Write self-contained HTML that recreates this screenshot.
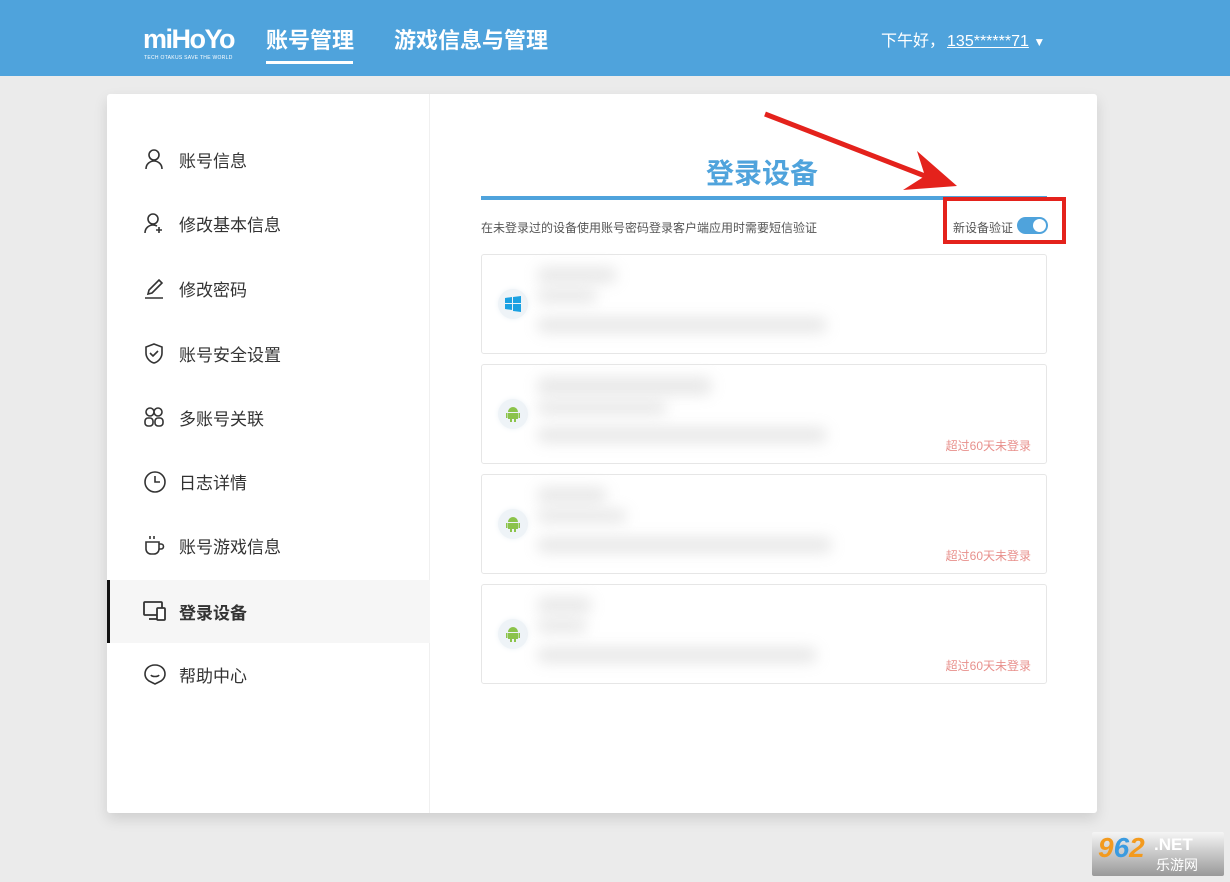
<!DOCTYPE html>
<html><head><meta charset="utf-8"><style>
*{margin:0;padding:0;box-sizing:border-box}
body{width:1230px;height:882px;background:#ebebeb;font-family:"Liberation Sans","Noto Sans CJK SC",sans-serif;position:relative;overflow:hidden}
.hd{position:absolute;left:0;top:0;width:1230px;height:76px;background:#4fa3dc;color:#fff}
.logo{position:absolute;left:143px;top:24px;font-size:27px;font-weight:bold;letter-spacing:-1.5px;font-family:"Liberation Sans",sans-serif}
.logo small{position:absolute;left:1px;top:31px;font-size:5px;letter-spacing:0.3px;white-space:nowrap;font-weight:normal}
.nav1{position:absolute;left:266px;top:23px;font-size:22px;font-weight:bold}
.nav1:after{content:"";position:absolute;left:0;top:38px;width:87px;height:3px;background:#fff}
.nav2{position:absolute;left:394px;top:23px;font-size:22px;font-weight:bold}
.user{position:absolute;left:881px;top:27px;font-size:16px}
.user u{margin-left:2px}
.card{position:absolute;left:107px;top:94px;width:990px;height:719px;background:#fff;border-radius:3px;box-shadow:0 6px 14px rgba(0,0,0,.12)}
.side{position:absolute;left:0;top:0;width:323px;height:719px;border-right:1px solid #f0f0f0}
.it{position:absolute;left:0;width:323px;height:63px;font-size:17px;color:#333;display:flex;align-items:center;padding-left:72px}
.it svg{position:absolute;left:36px;top:20px}
.act{background:#f6f6f6;border-left:3px solid #111;font-weight:bold;padding-left:69px}
.act svg{left:33px}
.ttl{position:absolute;left:706px;top:152px;font-size:28px;font-weight:bold;color:#4fa3dc}
.line{position:absolute;left:481px;top:196px;width:566px;height:4px;background:#4fa3dc}
.desc{position:absolute;left:481px;top:219px;font-size:12px;color:#555}
.nd{position:absolute;left:953px;top:219px;font-size:12px;color:#555}
.tg{position:absolute;left:1017px;top:217px;width:31px;height:17px;border-radius:9px;background:#4fa3dc}
.tg:after{content:"";position:absolute;right:2px;top:2px;width:13px;height:13px;border-radius:50%;background:#fff}
.rb{position:absolute;left:943px;top:197px;width:123px;height:47px;border:4px solid #e4221c}
.dev{position:absolute;left:481px;width:566px;height:100px;border:1px solid #e6e6e6;border-radius:3px;background:#fff}
.ic{position:absolute;left:16px;top:34px;width:30px;height:30px;border-radius:50%;background:#eef3f7;box-shadow:0 0 6px #eef3f7}
.ic svg{position:absolute;left:7px;top:7px}
.b{position:absolute;background:#ccc;filter:blur(7px);border-radius:8px;opacity:.45}
.old{position:absolute;right:15px;top:72px;font-size:12px;color:#e8908c}
.wm{position:absolute;left:1092px;top:832px;width:132px;height:44px;background:linear-gradient(#f5f5f5,#999);border-radius:2px}
</style></head><body>
<div class="hd">
<div class="logo">miHoYo<small>TECH OTAKUS SAVE THE WORLD</small></div>
<div class="nav1">账号管理</div>
<div class="nav2">游戏信息与管理</div>
<div class="user">下午好，<u>135******71</u> <span style="font-size:12px">▼</span></div>
</div>
<div class="card"><div class="side">
<div class="it" style="top:34px"><svg width="22" height="22" fill="none" stroke="#333" stroke-width="1.6"><circle cx="11" cy="7" r="5"/><path d="M3 21c0-5 4-8 8-8s8 3 8 8"/></svg>账号信息</div>
<div class="it" style="top:98px"><svg width="22" height="22" fill="none" stroke="#333" stroke-width="1.6"><circle cx="10" cy="7" r="5"/><path d="M2 21c0-5 4-8 8-8 2 0 3 .5 4 1M16 15v6M13 18h6"/></svg>修改基本信息</div>
<div class="it" style="top:163px"><svg width="22" height="22" fill="none" stroke="#333" stroke-width="1.6"><path d="M5 17l1-4L16 3l3 3L9 16zM2 21h18"/></svg>修改密码</div>
<div class="it" style="top:228px"><svg width="22" height="22" fill="none" stroke="#333" stroke-width="1.6"><path d="M11 2l8 3v6c0 5-4 9-8 10-4-1-8-5-8-10V5z"/><path d="M7 11l3 3 5-5"/></svg>账号安全设置</div>
<div class="it" style="top:292px"><svg width="22" height="22" fill="none" stroke="#333" stroke-width="1.6"><circle cx="7" cy="6" r="4"/><circle cx="15" cy="6" r="4"/><rect x="2" y="12" width="8" height="8" rx="3"/><rect x="12" y="12" width="8" height="8" rx="3"/></svg>多账号关联</div>
<div class="it" style="top:356px"><svg width="24" height="24" fill="none" stroke="#333" stroke-width="1.6"><circle cx="12" cy="12" r="10"/><path d="M12 6v6h5"/></svg>日志详情</div>
<div class="it" style="top:420px"><svg width="22" height="22" fill="none" stroke="#333" stroke-width="1.6"><path d="M3 8h13v7a5 5 0 0 1-5 5H8a5 5 0 0 1-5-5zM16 10h2a2 2 0 0 1 0 5h-2M7 2v3M11 2v3"/></svg>账号游戏信息</div>
<div class="it act" style="top:486px"><svg width="24" height="22" fill="none" stroke="#333" stroke-width="1.8"><rect x="1" y="2" width="18" height="13" rx="1"/><path d="M6 19h8"/><rect x="14" y="8" width="8" height="12" rx="1" fill="#fff"/></svg>登录设备</div>
<div class="it" style="top:549px"><svg width="24" height="22" fill="none" stroke="#333" stroke-width="1.6"><path d="M12 2C6 2 2 6 2 11c0 4 3 7 6 8l4 2 4-2c3-1 6-4 6-8 0-5-4-9-10-9z"/><path d="M8 12c1 2 7 2 8 0"/></svg>帮助中心</div>
</div></div>
<div class="ttl">登录设备</div>
<div class="line"></div>
<div class="desc">在未登录过的设备使用账号密码登录客户端应用时需要短信验证</div>
<div class="nd">新设备验证</div><div class="tg"></div>
<div class="rb"></div>
<svg style="position:absolute;left:0;top:0" width="1230" height="882"><path d="M765 114L925 176" stroke="#e4221c" stroke-width="5"/><path d="M957 186L903 190 925 176 917 151z" fill="#e4221c"/></svg>
<div class="dev" style="top:254px"><div class="ic"><svg width="16" height="16"><path d="M0 2l7-1v6H0zM8 1l8-1v7H8zM0 8h7v6l-7-1zM8 8h8v8l-8-1z" fill="#1ba1e2"/></svg></div>
<div class="b" style="left:55px;top:12px;width:80px;height:16px"></div><div class="b" style="left:55px;top:34px;width:60px;height:14px"></div><div class="b" style="left:55px;top:62px;width:290px;height:16px"></div></div>
<div class="dev" style="top:364px"><div class="ic"><svg width="16" height="16" fill="#8bc34a"><path d="M3 6a5 5 0 0 1 10 0zM3 7h10v6H3zM1 7h1.5v5H1zM13.5 7H15v5h-1.5zM5 13h2v3H5zM9 13h2v3H9z"/></svg></div>
<div class="b" style="left:55px;top:12px;width:175px;height:18px"></div><div class="b" style="left:55px;top:36px;width:130px;height:14px"></div><div class="b" style="left:55px;top:62px;width:290px;height:16px"></div><div class="old">超过60天未登录</div></div>
<div class="dev" style="top:474px"><div class="ic"><svg width="16" height="16" fill="#8bc34a"><path d="M3 6a5 5 0 0 1 10 0zM3 7h10v6H3zM1 7h1.5v5H1zM13.5 7H15v5h-1.5zM5 13h2v3H5zM9 13h2v3H9z"/></svg></div>
<div class="b" style="left:55px;top:12px;width:70px;height:16px"></div><div class="b" style="left:55px;top:34px;width:90px;height:14px"></div><div class="b" style="left:55px;top:62px;width:295px;height:16px"></div><div class="old">超过60天未登录</div></div>
<div class="dev" style="top:584px"><div class="ic"><svg width="16" height="16" fill="#8bc34a"><path d="M3 6a5 5 0 0 1 10 0zM3 7h10v6H3zM1 7h1.5v5H1zM13.5 7H15v5h-1.5zM5 13h2v3H5zM9 13h2v3H9z"/></svg></div>
<div class="b" style="left:55px;top:12px;width:55px;height:16px"></div><div class="b" style="left:55px;top:34px;width:50px;height:14px"></div><div class="b" style="left:55px;top:62px;width:280px;height:16px"></div><div class="old">超过60天未登录</div></div>
<div class="wm"><span style="position:absolute;left:6px;top:0;font:italic bold 28px 'Liberation Sans';color:#f39a1e">9<span style="color:#3a9be0">6</span>2</span><span style="position:absolute;left:62px;top:3px;font:bold 17px 'Liberation Sans';color:#fff">.NET</span><span style="position:absolute;left:64px;top:23px;font-size:14px;color:#fff;font-family:'Noto Sans CJK SC',sans-serif">乐游网</span></div>
</body></html>
